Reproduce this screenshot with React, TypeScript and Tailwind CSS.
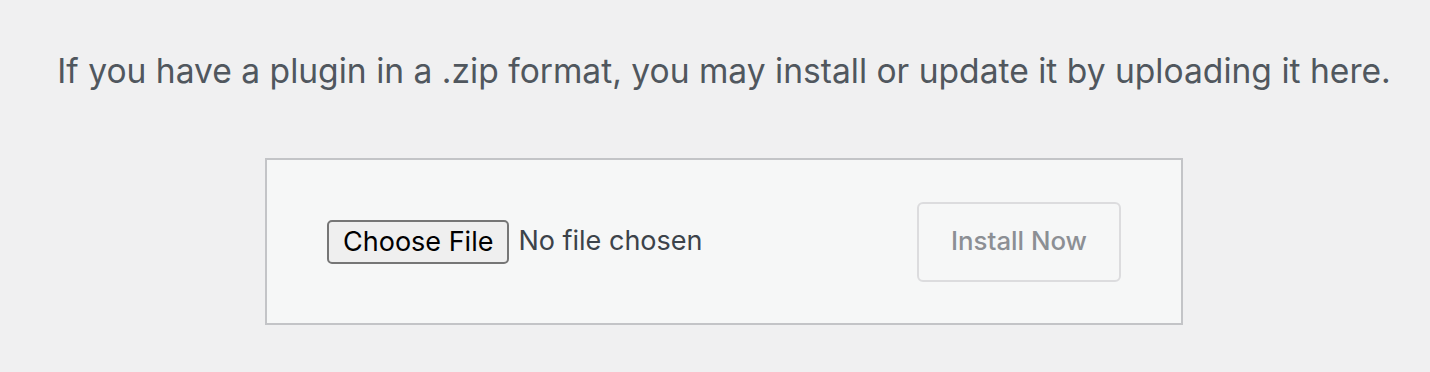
import React from "react";

export default function App() {
  return (
    <div className="w-[1430px] h-[372px] bg-[#f0f0f1] flex flex-col items-center pl-[18px] pt-[49px]" style={{ fontFamily: "Inter, 'Noto Sans', sans-serif" }}>
      <p className="text-[33.6px] leading-[44px] text-[#50575e] whitespace-nowrap">
        If you have a plugin in a .zip format, you may install or update it by uploading it here.
      </p>
      <div className="mt-[65px] w-[918px] h-[167px] border-2 border-[#c3c4c7] bg-[#f6f7f7] flex items-center justify-between px-[60px]">
        <div className="flex items-center">
          <button className="h-[44px] px-[14px] border-2 border-[#767676] rounded-[5px] bg-[#efefef] text-[27px] text-black leading-none">
            Choose File
          </button>
          <span className="ml-[9px] text-[27px] text-[#3c434a]">No file chosen</span>
        </div>
        <button className="h-[80px] w-[204px] border-2 border-[#dcdcde] rounded-[6px] bg-[#f6f7f7] text-[25.8px] font-medium text-[#8c8f94]">
          Install Now
        </button>
      </div>
    </div>
  );
}
